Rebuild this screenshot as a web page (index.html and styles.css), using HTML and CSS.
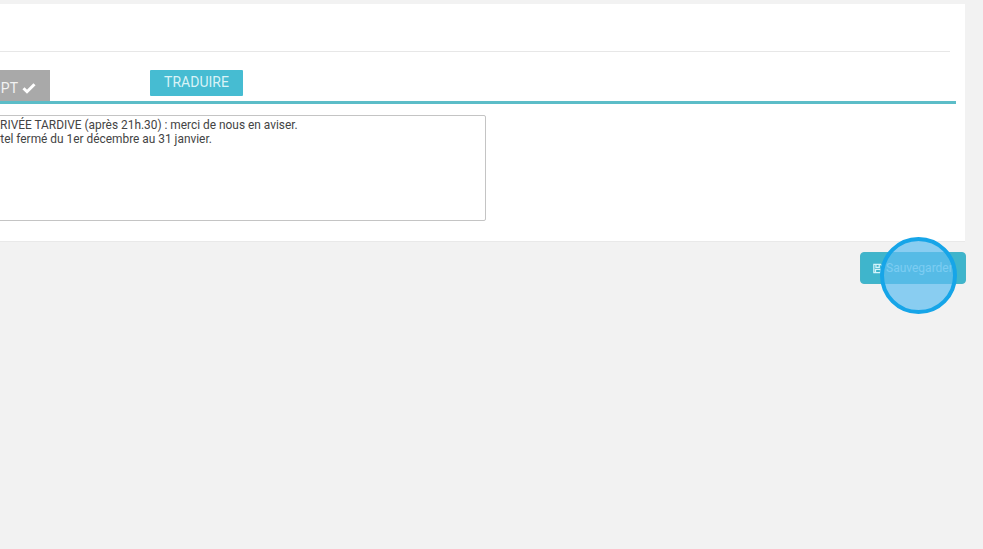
FILE: index.html
```html
<!DOCTYPE html>
<html>
  <head>
    <title>Description</title>
    <link rel="stylesheet" href="styles.css">
  </head>
  <body>
    <div class="page">
      <div class="panel">
        <div class="panel-head"></div>
        <div class="tabs">
          <div class="tab tab-done">
            PT
            <svg class="check" viewBox="0 0 14 12"><path d="M1.5 6.2 5 9.7l7.5-7.5" fill="none" stroke="#fff" stroke-width="3"/></svg>
          </div>
          <button class="tab-translate">TRADUIRE</button>
        </div>
        <textarea class="description" spellcheck="false">ARRIVÉE TARDIVE (après 21h.30) : merci de nous en aviser.
Hôtel fermé du 1er décembre au 31 janvier.</textarea>
      </div>
      <div class="actions">
        <button class="save">
          <svg class="save-icon" viewBox="0 0 12 12"><path d="M1 1h8l2 2v8H1zM3.5 1v3.5h4V1M3 11V7h6v4" fill="none" stroke="#d4f4fa" stroke-width="1.5"/></svg>
          Sauvegarder
        </button>
        <div class="touch"></div>
      </div>
    </div>
  </body>
</html>
```

FILE: styles.css
```css
* {
  box-sizing: border-box;
}

html,
body {
  overflow: hidden;
}

body {
  margin: 0;
  height: 549px;
  background-color: #f2f2f2;
  font-family: Roboto, "Liberation Sans", sans-serif;
}

.page {
  width: 1066px;
  margin-left: -100px;
  padding-top: 4px;
}

.panel {
  width: 1065px;
  height: 238px;
  padding: 0 9px 0 72px;
  background-color: #fff;
  border-bottom: 1px solid #e9e9e9;
}

.panel-head {
  height: 48px;
  margin-right: 6px;
  border-bottom: 1px solid #e7e7e7;
}

.tabs {
  display: flex;
  align-items: flex-start;
  gap: 100px;
  height: 34px;
  margin-top: 18px;
  border-bottom: 3px solid #5cbdc8;
}

.tab {
  display: flex;
  align-items: center;
  justify-content: flex-end;
  gap: 4px;
  width: 78px;
  height: 31px;
  padding: 4px 14px 0 0;
  background-color: #a9a9a9;
  color: #f2f2f2;
  font-size: 14px;
}

.check {
  width: 14px;
  height: 12px;
}

.tab-translate {
  width: 93px;
  height: 26px;
  padding: 0 0 2px;
  border: none;
  border-radius: 1px;
  background-color: #46bcd2;
  color: #d9f3f7;
  font-family: inherit;
  font-size: 14px;
}

.description {
  display: block;
  width: 514px;
  height: 106px;
  margin-top: 11px;
  padding: 3px 12px;
  border: 1px solid #c4c4c4;
  border-radius: 2px;
  resize: none;
  outline: none;
  overflow: hidden;
  color: #444;
  font-family: inherit;
  font-size: 11.9px;
  line-height: 13.6px;
}

.actions {
  position: relative;
  display: flex;
  justify-content: flex-end;
  margin-top: 10px;
}

.save {
  display: flex;
  align-items: center;
  gap: 3px;
  width: 106px;
  height: 32px;
  padding: 0 0 0 12px;
  border: 1px solid #45b4c8;
  border-radius: 4px;
  background-color: #3fb5cc;
  color: #c4f0f8;
  font-family: inherit;
  font-size: 12px;
  white-space: nowrap;
}

.save-icon {
  width: 10px;
  height: 11px;
  flex: none;
}

/* tap marker from the screen recording */
.touch {
  position: absolute;
  top: -15px;
  right: 9px;
  width: 77px;
  height: 77px;
  border: 4px solid #16a5e8;
  border-radius: 50%;
  background-color: rgba(96, 190, 240, 0.72);
}
```
